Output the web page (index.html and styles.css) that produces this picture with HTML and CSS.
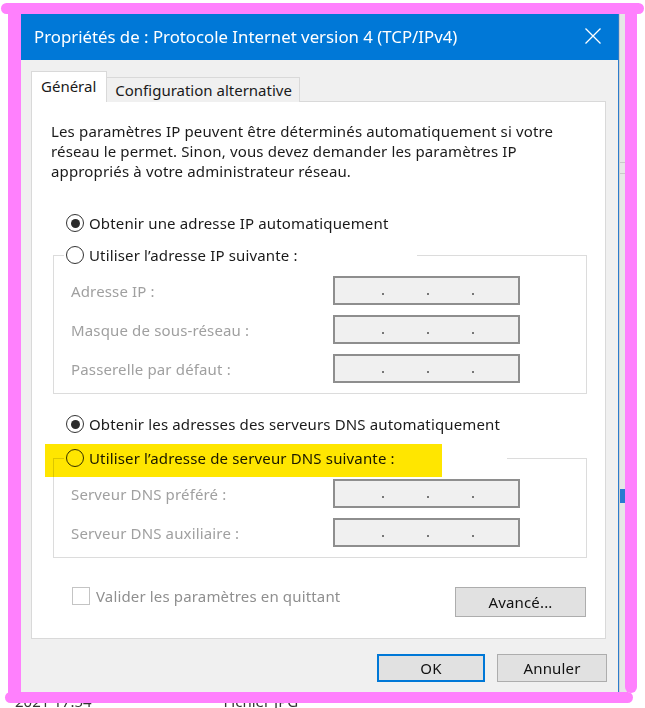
FILE: index.html
```html
<!DOCTYPE html>
<html lang="fr">
<head>
<meta charset="utf-8">
<title>Propriétés de : Protocole Internet version 4 (TCP/IPv4)</title>
<link rel="stylesheet" href="styles.css">
</head>
<body>
<div class="screen">
  <div class="desk">
    <div class="dialog">
      <div class="titlebar">
        <span class="title">Propriétés de : Protocole Internet version 4 (TCP/IPv4)</span>
        <svg class="close" width="16" height="16" viewBox="0 0 16 16" aria-hidden="true"><path d="M0.5 0.5L15.5 15.5M15.5 0.5L0.5 15.5" stroke="#fff" stroke-width="1.3" fill="none"/></svg>
      </div>
      <div class="body">
        <div class="tabs">
          <div class="tab active">Général</div>
          <div class="tab">Configuration alternative</div>
        </div>
        <div class="panel">
          <p class="intro">Les paramètres IP peuvent être déterminés automatiquement si votre<br>réseau le permet. Sinon, vous devez demander les paramètres IP<br>appropriés à votre administrateur réseau.</p>
          <div class="radio-row first"><span class="radio checked"></span>Obtenir une adresse IP automatiquement</div>
          <fieldset class="group g-ip">
            <legend class="legend l-ip"><span class="radio"></span>Utiliser l’adresse IP suivante :</legend>
            <div class="field"><span class="label">Adresse IP :</span><span class="ipbox"><i></i><i></i><i></i></span></div>
            <div class="field"><span class="label">Masque de sous-réseau :</span><span class="ipbox"><i></i><i></i><i></i></span></div>
            <div class="field"><span class="label">Passerelle par défaut :</span><span class="ipbox"><i></i><i></i><i></i></span></div>
          </fieldset>
          <div class="radio-row dns-auto"><span class="radio checked"></span>Obtenir les adresses des serveurs DNS automatiquement</div>
          <fieldset class="group g-dns">
            <legend class="legend l-dns"><span class="radio"></span>Utiliser l’adresse de serveur DNS suivante :</legend>
            <div class="field"><span class="label">Serveur DNS préféré :</span><span class="ipbox"><i></i><i></i><i></i></span></div>
            <div class="field"><span class="label">Serveur DNS auxiliaire :</span><span class="ipbox"><i></i><i></i><i></i></span></div>
          </fieldset>
          <div class="bottom-row">
            <div class="check"><span class="checkbox"></span>Valider les paramètres en quittant</div>
            <div class="btn adv">Avancé...</div>
          </div>
        </div>
        <div class="actions">
          <div class="btn ok">OK</div>
          <div class="btn cancel">Annuler</div>
        </div>
      </div>
    </div>
    <div class="behind">
      <span class="frag f1"></span>
      <span class="frag f2"></span>
      <span class="frag f3"></span>
    </div>
  </div>
  <div class="files"><span class="date">2021 17:54</span><span class="type">Fichier JPG</span></div>
  <div class="marker" aria-hidden="true">
    <span class="bar top"></span>
    <span class="bar left"></span>
    <span class="bar right"></span>
    <span class="bar bottom"></span>
  </div>
</div>
</body>
</html>
```

FILE: styles.css
```css
* { box-sizing: border-box; }
html, body { margin: 0; padding: 0; background: #fff; }
body { font-family: "Noto Sans", "Open Sans", "DejaVu Sans", sans-serif; font-size: 15px; color: #1a1a1a; }

.screen { position: relative; width: 645px; height: 708px; overflow: hidden; background: #fff; }

.desk { display: flex; height: 692px; padding: 12px 0 0 18px; }

.dialog { width: 601px; height: 680px; background: #f0f0f0; border-right: 1px solid #2c7ccc; display: flex; flex-direction: column; }

.titlebar { height: 48px; flex: none; background: #0078d7; color: #fff; display: flex; align-items: center; padding: 0 17px 0 16px; }
.title { font-size: 16.8px; white-space: nowrap; }
.close { margin-left: auto; }

.body { padding: 12px 12px 0 13px; letter-spacing: 0.15px; }

.tabs { display: flex; align-items: flex-end; height: 30px; margin-bottom: -1px; position: relative; z-index: 1; letter-spacing: 0; }
.tab { height: 25px; padding: 0 7px 0 8px; border: 1px solid #d9d9d9; border-bottom: none; background: #f0f0f0; display: flex; align-items: center; white-space: nowrap; margin-left: -1px; }
.tab.active { height: 31px; background: #fff; margin-left: 0; padding: 0 10px 3px 9px; }

.panel { height: 538px; background: #fff; border: 1px solid #d9d9d9; padding: 19px 19px 0 19px; }

.intro { margin: 0; line-height: 20px; }

.radio-row { display: flex; align-items: center; height: 22px; margin-left: 15px; white-space: nowrap; }
.radio-row.first { margin-top: 31px; }
.radio-row.dns-auto { margin-top: 19px; }

.radio { width: 18px; height: 18px; border: 1.4px solid #333; border-radius: 50%; display: inline-flex; align-items: center; justify-content: center; margin-right: 5px; flex: none; }
.radio.checked::after { content: ""; width: 9px; height: 9px; border-radius: 50%; background: #2b2b2b; }

.group { margin: 10px 0 0 2px; width: 534px; border: 1px solid #dcdcdc; padding: 10px 0 10px 10px; min-width: 0; }
.g-dns { margin-top: 12px; }

.legend { display: flex; align-items: center; height: 22px; padding: 0 0 0 2px; white-space: nowrap; position: relative; }
.l-ip { width: 353px; }
.l-dns { width: 443px; }
.l-dns::before { content: ""; position: absolute; left: -19px; top: -3px; width: 397px; height: 33px; background: #ffe600; mix-blend-mode: multiply; }

.field { display: flex; align-items: center; margin-left: 7px; height: 29px; }
.field + .field { margin-top: 10px; }
.label { width: 262px; color: #a0a0a0; }
.ipbox { width: 187px; height: 29px; background: #f0f0f0; border: 2px solid #8e8e8e; display: flex; align-items: flex-end; padding: 0 0 8px 47px; gap: 43px; }
.ipbox i { width: 2px; height: 2px; background: #777; display: block; }

.bottom-row { display: flex; justify-content: space-between; align-items: flex-start; margin-top: 29px; }
.check { display: flex; align-items: center; margin-left: 21px; color: #8f8f8f; height: 18px; white-space: nowrap; }
.checkbox { width: 18px; height: 18px; border: 1px solid #c4c4c4; margin-right: 6px; background: #fff; }

.btn { display: flex; align-items: center; justify-content: center; background: #e1e1e1; border: 1px solid #adadad; color: #111; white-space: nowrap; }
.adv { width: 131px; height: 30px; }

.actions { display: flex; justify-content: flex-end; gap: 12px; margin-top: 15px; margin-right: -1px; }
.ok { width: 108px; height: 28px; border: 2px solid #0078d7; }
.cancel { width: 110px; height: 28px; }

.behind { width: 10px; height: 680px; background: #e6e6e6; border-left: 1px solid #d0d0d0; display: flex; flex-direction: column; }
.frag { display: block; }
.f1 { height: 1px; background: #c8c8c8; margin-top: 150px; }
.f2 { height: 1px; background: #c8c8c8; margin-top: 10px; }
.f3 { height: 14px; background: #2a7ad0; margin-top: 315px; }

.files { display: flex; padding-left: 15px; font-size: 15px; line-height: 18px; color: #333; }
.files .type { margin-left: 132px; }

.marker { position: absolute; inset: 0; pointer-events: none; }
.bar { position: absolute; background: #ff80fd; border-radius: 6px; }
.bar.top { left: 1px; top: 3px; width: 643px; height: 11px; }
.bar.left { left: 8px; top: 3px; width: 13px; height: 699px; }
.bar.right { left: 625px; top: 3px; width: 12px; height: 690px; }
.bar.bottom { left: 5px; top: 692px; width: 628px; height: 11px; }
```
